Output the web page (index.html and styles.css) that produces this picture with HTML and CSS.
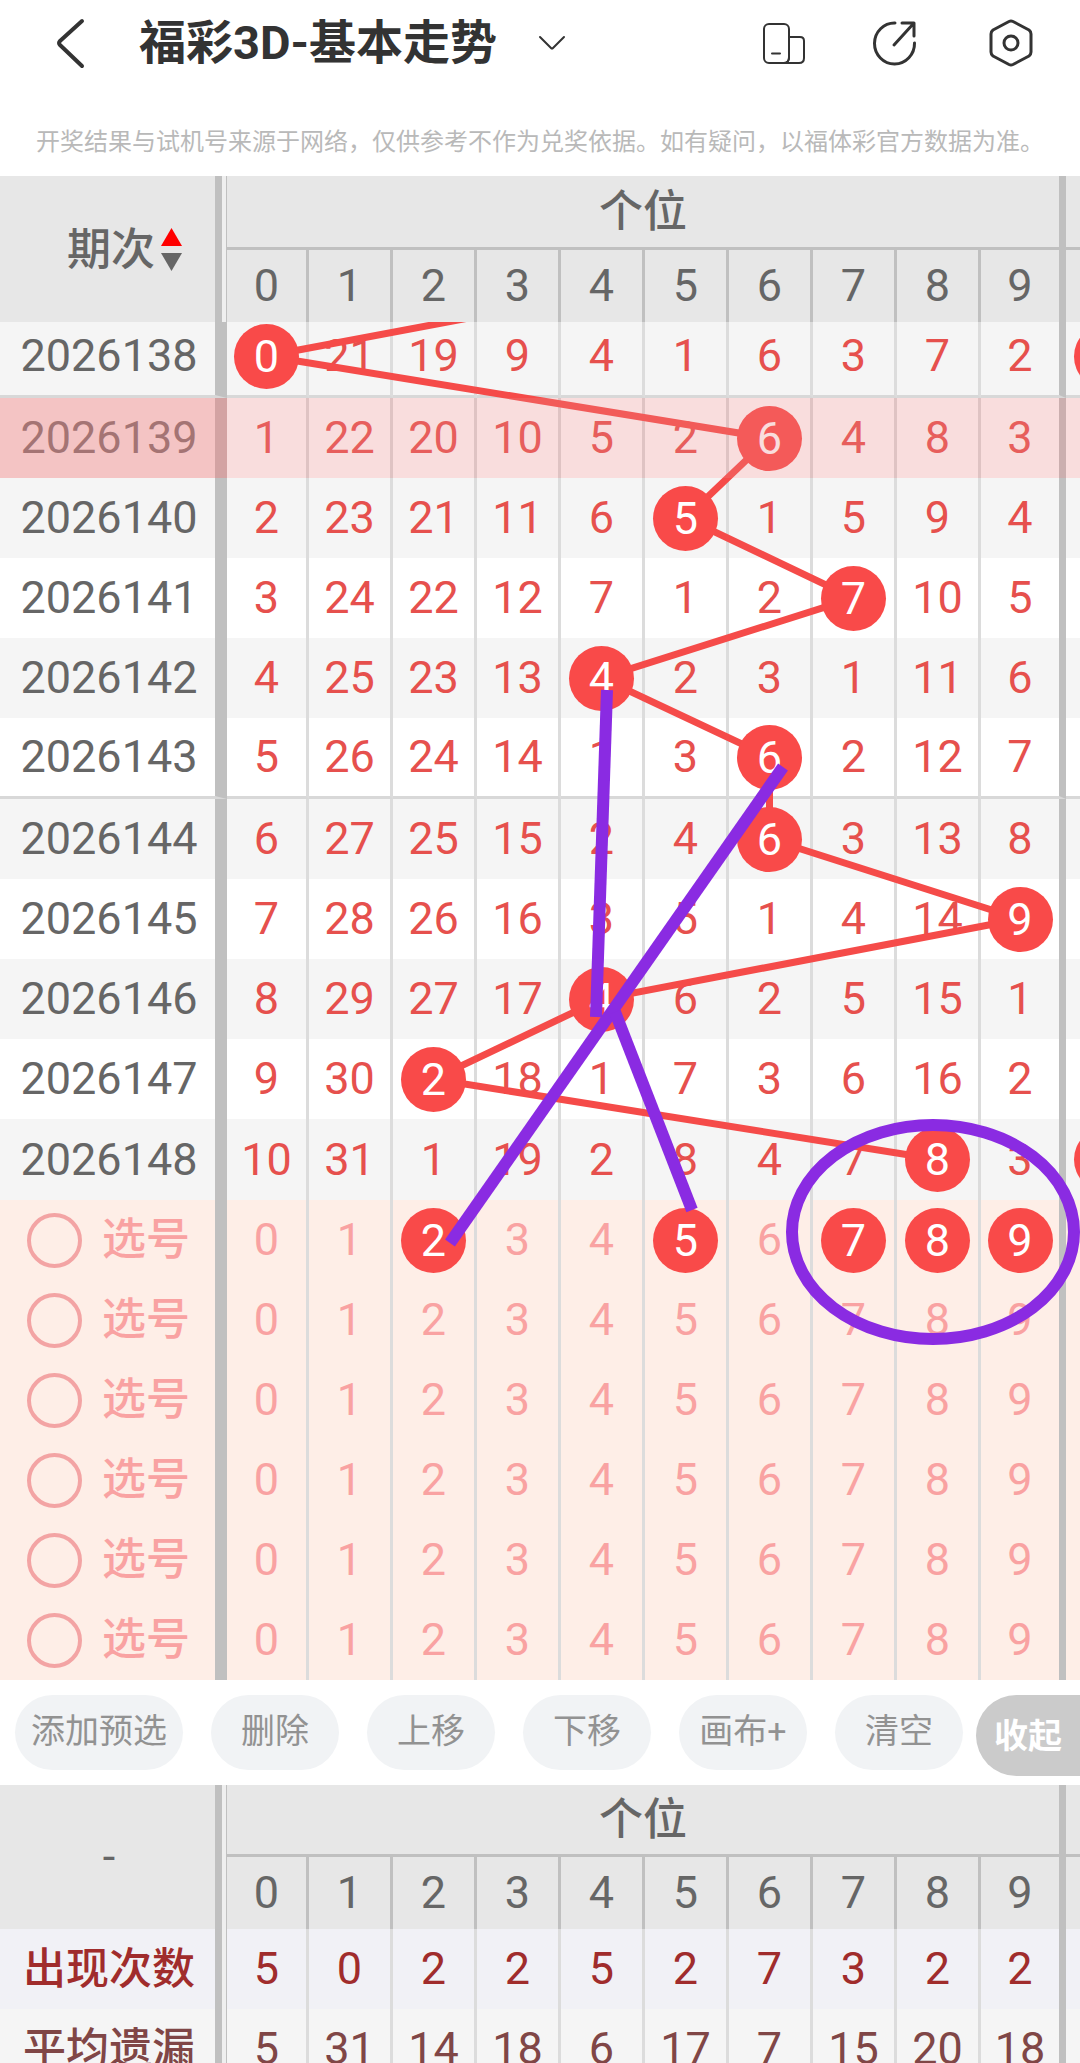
FILE: index.html
```
<!DOCTYPE html>
<html lang="zh-CN">
  <head>
    <meta charset="UTF-8" />
    <meta name="viewport" content="width=device-width, initial-scale=1.0" />
    <title>福彩3D-基本走势</title>
    <link rel="stylesheet" href="styles.css">
  </head>
  <body>
    <header class="topbar">
      <button class="icon-btn" aria-label="返回">
        <svg width="28" height="52" viewBox="0 0 28 52">
          <path d="M25 4 L3 24 Q1 26 3 28 L25 49" stroke-width="4" />
        </svg>
      </button>
      <h1>福彩3D-基本走势</h1>
      <button class="icon-btn" aria-label="切换走势">
        <svg width="30" height="18" viewBox="0 0 30 18">
          <path d="M3 3 L14 14 Q15 15 16 14 L27 3" />
        </svg>
      </button>
      <div class="actions">
        <button class="icon-btn" aria-label="横竖屏">
          <svg width="46" height="48" viewBox="0 0 46 48">
            <rect x="3" y="5" width="25" height="39" rx="5" />
            <path d="M28 18 H39 Q43 18 43 22 V39 Q43 44 38 44 H23 M28 38 Q28 44 23 44 M11 34.500 H19" />
          </svg>
        </button>
        <button class="icon-btn" aria-label="分享">
          <svg width="46" height="48" viewBox="0 0 46 48">
            <path d="M24 4 A20 20.500 0 1 0 43.500 24" stroke-width="3" />
            <path d="M31 4 H43 V17 M43 4 L23 26" stroke-width="3" />
          </svg>
        </button>
        <button class="icon-btn" aria-label="设置">
          <svg width="60" height="48" viewBox="0 0 60 48">
            <path d="M28 2.500 Q30 1.500 32 2.500 L48 11 Q50 12.500 50 15 V33 Q50 35.500 48 37 L32 45.500 Q30 46.500 28 45.500 L12 37 Q10 35.500 10 33 V15 Q10 12.500 12 11 Z" stroke-width="3" />
            <circle cx="30" cy="24" r="7" stroke-width="3" />
          </svg>
        </button>
      </div>
    </header>
    <p class="notice">开奖结果与试机号来源于网络，仅供参考不作为兑奖依据。如有疑问，以福体彩官方数据为准。</p>

    <section class="chart">
      <table class="grid head-grid">
        <colgroup>
          <col class="c-label"><col class="c-first"><col span="8" class="c-num"><col class="c-last"><col class="c-num">
        </colgroup>
        <thead>
          <tr>
            <th class="label sort" rowspan="2">
              <button class="sort-btn">
                期次
                <svg width="21" height="44" viewBox="0 0 21 44">
                  <path d="M10.500 0 L21 18 H0 Z" fill="#f00" />
                  <path d="M10.500 43 L21 25 H0 Z" fill="#666" />
                </svg>
              </button>
            </th>
            <th class="group" colspan="10">个位</th>
            <th class="group"></th>
          </tr>
          <tr class="digits"></tr>
        </thead>
      </table>
      <div class="viewport">
        <div class="canvas">
          <table class="grid body-grid">
            <colgroup>
              <col class="c-label"><col class="c-first"><col span="8" class="c-num"><col class="c-last"><col class="c-num">
            </colgroup>
            <tbody id="draws"></tbody>
            <tbody id="picks"></tbody>
          </table>
          <svg class="trend"><polyline id="trend-line" /></svg>
          <!-- hand drawn marks -->
          <svg class="marks">
            <path d="M607 373 L596 700" />
            <path d="M783 450 L450 926" />
            <path d="M615 695 L692 893" />
            <ellipse cx="933" cy="915" rx="141" ry="107" />
          </svg>
        </div>
      </div>
    </section>

    <nav class="toolbar">
      <div class="tools">
        <button>添加预选</button>
        <button>删除</button>
        <button>上移</button>
        <button>下移</button>
        <button>画布+</button>
        <button>清空</button>
      </div>
      <button class="fold">收起</button>
    </nav>

    <section class="chart">
      <table class="grid stat-grid">
        <colgroup>
          <col class="c-label"><col class="c-first"><col span="8" class="c-num"><col class="c-last"><col class="c-num">
        </colgroup>
        <thead>
          <tr>
            <th class="label" rowspan="2">-</th>
            <th class="group" colspan="10">个位</th>
            <th class="group"></th>
          </tr>
          <tr class="digits"></tr>
        </thead>
        <tbody id="stats"></tbody>
      </table>
    </section>

    <script>
      const digits = [0, 1, 2, 3, 4, 5, 6, 7, 8, 9];
      const hits = [0, 6, 5, 7, 4, 6, 6, 9, 4, 2, 8];
      const firstIssue = 2026138;
      const miss = [0, 20, 18, 8, 3, 0, 5, 2, 6, 1];
      const picked = [2, 5, 7, 8, 9];
      const stats = [
        ["出现次数", "count", [5, 0, 2, 2, 5, 2, 7, 3, 2, 2]],
        ["平均遗漏", "average", [5, 31, 14, 18, 6, 17, 7, 15, 20, 18]],
      ];

      const ball = (n) => `<span class="ball">${n}</span>`;

      document.querySelectorAll(".digits").forEach((row) => {
        row.innerHTML = digits.map((d) => `<th>${d}</th>`).join("") + "<th></th>";
      });

      // Draw rows: the hit digit is a ball, the others show their omission
      hits.forEach((hit, i) => {
        const row = document.createElement("tr");
        if (i % 5 === 0) row.classList.add("group-end");
        if (i === 1) row.classList.add("active");
        const cells = digits.map((d) => {
          miss[d] = d === hit ? 0 : miss[d] + 1;
          return `<td>${d === hit ? ball(d) : miss[d]}</td>`;
        });
        const next = i === 0 || i === hits.length - 1 ? ball("") : "";
        row.innerHTML = `<th class="label">${firstIssue + i}</th>${cells.join("")}<td>${next}</td>`;
        document.getElementById("draws").appendChild(row);
      });

      // Pick rows
      for (let i = 0; i < 6; i++) {
        const row = document.createElement("tr");
        const cells = digits.map((d) =>
          `<td>${i === 0 && picked.includes(d) ? ball(d) : d}</td>`
        );
        row.innerHTML = `<th class="label"><label><input type="radio" name="pick">选号</label></th>${cells.join("")}<td></td>`;
        document.getElementById("picks").appendChild(row);
      }

      stats.forEach(([name, cls, values]) => {
        const row = document.createElement("tr");
        row.className = cls;
        row.innerHTML = `<th class="label">${name}</th>${values.map((v) => `<td>${v}</td>`).join("")}<td></td>`;
        document.getElementById("stats").appendChild(row);
      });

      // Connect the balls, coming in from the previous issue above
      function drawTrend() {
        const origin = document.querySelector(".canvas").getBoundingClientRect();
        const center = (el) => {
          const r = el.getBoundingClientRect();
          return [r.left + r.width / 2 - origin.left, r.top + r.height / 2 - origin.top];
        };
        const rows = [...document.querySelectorAll("#draws tr")];
        const points = rows.map((row) => center(row.querySelector(".ball")));
        const previous = center(rows[0].cells[6]);
        points.unshift([previous[0], -40]);
        document.getElementById("trend-line").setAttribute("points", points.join(" "));
      }
      drawTrend();
      window.addEventListener("resize", drawTrend);
    </script>
  </body>
</html>
```

FILE: styles.css
```
* {
  box-sizing: border-box;
}

body {
  margin: 0;
  height: 100vh;
  overflow: hidden;
  background-color: #fff;
  color: #333;
  font-family: Roboto, "Noto Sans CJK SC", sans-serif;
}

button {
  font-family: inherit;
  border: none;
  padding: 0;
  background: none;
  cursor: pointer;
}

/* Top bar */
.topbar {
  display: flex;
  align-items: center;
  height: 86px;
  padding: 0 39px 0 57px;
}

.topbar h1 {
  margin: 0 40px 0 54px;
  font-size: 47px;
  line-height: 60px;
  font-weight: 700;
  white-space: nowrap;
}

.icon-btn {
  display: flex;
}

.icon-btn svg {
  fill: none;
  stroke: #333;
  stroke-width: 2;
  stroke-linecap: round;
  stroke-linejoin: round;
}

.actions {
  display: flex;
  gap: 64px;
  margin-left: auto;
}

.notice {
  margin: 0;
  padding: 38px 16px 16px;
  font-size: 24px;
  line-height: 36px;
  text-align: center;
  white-space: nowrap;
  color: #b9b9b9;
}

/* Chart */
.chart {
  overflow: hidden;
}

.grid {
  width: 1150px;
  table-layout: fixed;
  border-collapse: separate;
  border-spacing: 0;
  font-size: 45px;
  line-height: 60px;
  text-align: center;
}

.c-label {
  width: 227px;
}

.c-first {
  width: 82px;
}

.c-num {
  width: 84px;
}

.c-last {
  width: 85px;
}

.grid th,
.grid td {
  padding: 0;
  height: 80px;
  font-weight: 400;
  border-right: 3px solid #dcdcdc;
}

.grid td:nth-child(11) {
  border-right: 7px solid #c0c0c0;
}

.grid .label {
  padding-left: 3px;
  border-right: 12px solid #c0c0c0;
  color: #666;
}

.grid thead th {
  height: 72px;
  background-color: #e7e7e7;
  border-right-color: #c0c0c0;
  color: #666;
}

.head-grid .group {
  height: 74px;
}

.grid thead .group {
  font-size: 44px;
  font-weight: 500;
  border-right: 7px solid #c0c0c0;
  border-bottom: 3px solid #c0c0c0;
}

.digits th:nth-child(10) {
  border-right-width: 7px;
}

/* Double rule beside the label column */
.head-grid .label,
.stat-grid .label {
  padding-right: 12px;
  border-right: none;
  box-shadow: inset -1px 0 #c0c0c0, inset -5px 0 #efefef, inset -12px 0 #c0c0c0;
}

.grid .sort {
  padding-left: 34px;
}

.sort-btn {
  display: inline-flex;
  align-items: center;
  gap: 6px;
  padding-bottom: 4px;
  font-size: 44px;
  line-height: 48px;
  font-weight: 500;
  color: #666;
  vertical-align: middle;
}

/* Draw rows, the first one is partly scrolled under the head */
.viewport {
  overflow: hidden;
}

.canvas {
  position: relative;
  margin-top: -5px;
}

#draws td {
  color: #e6504d;
}

#draws tr:nth-child(odd) {
  background-color: #f5f5f5;
}

#draws .group-end > * {
  height: 81px;
  border-bottom: 3px solid #d8d8d8;
}

#draws .group-end:last-child > * {
  border-bottom: none;
}

.active,
.active .label {
  position: relative;
}

.active::after,
.active .label::after {
  content: "";
  position: absolute;
  inset: 0;
  z-index: 3;
  background-color: rgba(233, 133, 133, 0.28);
}

.active .label::after {
  right: -12px;
}

.ball {
  position: relative;
  z-index: 2;
  display: block;
  width: 65px;
  height: 65px;
  margin: 0 auto;
  border-radius: 50%;
  background-color: #f94a49;
  color: #fff;
  line-height: 65px;
}

.trend,
.marks {
  position: absolute;
  top: 0;
  left: 0;
  width: 100%;
  height: 100%;
  overflow: visible;
  fill: none;
  pointer-events: none;
}

.trend {
  z-index: 1;
  stroke: #f54b49;
  stroke-width: 7;
}

.marks {
  z-index: 4;
  stroke: #8a2be2;
  stroke-width: 12;
}

/* Pick rows */
#picks tr {
  background-color: #feeee7;
}

#picks td,
#picks .label {
  color: #f9a2a2;
}

#picks label {
  display: flex;
  align-items: center;
  gap: 20px;
  padding-left: 24px;
  font-size: 44px;
  font-weight: 500;
}

#picks input {
  appearance: none;
  width: 55px;
  height: 55px;
  margin: 0;
  border: 4px solid #f3a4a4;
  border-radius: 50%;
}

#picks input:checked {
  background-color: #f3a4a4;
}

/* Toolbar */
.toolbar {
  display: flex;
  align-items: flex-start;
  justify-content: space-between;
  height: 105px;
  padding: 15px 0 0 15px;
}

.tools {
  display: flex;
  gap: 28px;
}

.toolbar button {
  flex: none;
  min-width: 128px;
  height: 75px;
  padding: 0 16px 8px;
  border-radius: 38px;
  background-color: #f1f3f5;
  font-size: 34px;
  color: #929292;
}

.toolbar .fold {
  min-width: 104px;
  height: 81px;
  padding: 0 18px 4px;
  border-radius: 41px 0 0 41px;
  background-color: #cbcbcb;
  font-weight: 700;
  color: #fff;
}

/* Statistics */
#stats .label {
  font-size: 43px;
  font-weight: 500;
}

.count {
  background-color: #f1f1f6;
}

.average {
  background-color: #f5f5f5;
}

.count td,
#stats .count .label {
  color: #a02c2c;
}

.average td,
#stats .average .label {
  color: #804646;
}
```
